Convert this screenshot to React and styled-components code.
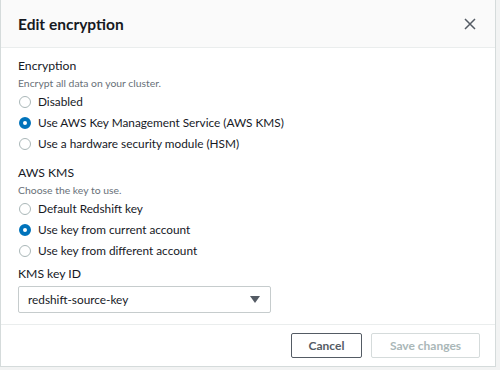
import React from 'react';
import styled, { createGlobalStyle } from 'styled-components';

const GlobalStyle = createGlobalStyle`
    body {
        margin: 0;
        background: #f2f3f3;
        font-family: Lato, "Noto Sans", Arial, sans-serif;
        color: #16191f;
    }
`;

const Page = styled.div`
    width: 500px;
    height: 370px;
    overflow: hidden;
    background: #f2f3f3;
`;

const Dialog = styled.div`
    width: 496px;
    height: 367px;
    background: #fff;
    border: 1px solid #d5dbdb;
    border-top: none;
    display: flex;
    flex-direction: column;
    box-sizing: border-box;
`;

const Header = styled.div`
    height: 48px;
    flex-shrink: 0;
    box-sizing: border-box;
    background: #fafafa;
    border-bottom: 1px solid #eaeded;
    display: flex;
    align-items: center;
    justify-content: space-between;
    padding: 0 18px 0 17px;
    h2 {
        margin: 0;
        font-size: 15.5px;
        font-weight: 700;
    }
`;

const CloseButton = styled.button`
    border: none;
    background: none;
    padding: 0;
    width: 14px;
    height: 14px;
    display: flex;
    align-items: center;
    justify-content: center;
`;

const Body = styled.div`
    flex: 1;
    min-height: 0;
    padding: 9px 17px 0;
`;

const Section = styled.div`
    margin-bottom: ${p => p.$gap ?? 10}px;
`;

const Label = styled.div`
    font-size: 12.2px;
    line-height: 18px;
`;

const Description = styled.div`
    font-size: 10.4px;
    line-height: 16px;
    color: #687078;
`;

const RadioRow = styled.label`
    display: flex;
    align-items: center;
    height: 21px;
    font-size: 11.8px;
    padding-left: 1px;
`;

const Circle = styled.span`
    width: 12px;
    height: 12px;
    box-sizing: border-box;
    border-radius: 50%;
    margin-right: 7px;
    border: ${p => (p.$checked ? '4px solid #0073bb' : '1.2px solid #aab7b8')};
    background: #fff;
    flex-shrink: 0;
`;

const Select = styled.div`
    margin-top: 3px;
    width: 253px;
    height: 27px;
    box-sizing: border-box;
    border: 1px solid #c6cccd;
    border-radius: 2px;
    display: flex;
    align-items: center;
    justify-content: space-between;
    padding: 0 10px 0 9px;
    font-size: 11.8px;
`;

const Footer = styled.div`
    height: 42px;
    flex-shrink: 0;
    box-sizing: border-box;
    border-top: 1px solid #eaeded;
    display: flex;
    justify-content: flex-end;
    align-items: center;
    gap: 9px;
    padding: 0 15px 0 0;
`;

const Button = styled.button`
    height: 25px;
    width: ${p => p.$w}px;
    box-sizing: border-box;
    border-radius: 2px;
    background: #fff;
    font-family: inherit;
    font-size: 12px;
    font-weight: 700;
    padding: 0;
    border: 1px solid ${p => (p.disabled ? '#d5dbdb' : '#545b64')};
    color: ${p => (p.disabled ? '#aab7b8' : '#545b64')};
`;

function Radio({ label, checked }) {
    return (
        <RadioRow>
            <Circle $checked={checked} />
            {label}
        </RadioRow>
    );
}

export default function App() {
    return (
        <Page>
            <GlobalStyle />
            <Dialog>
                <Header>
                    <h2>Edit encryption</h2>
                    <CloseButton>
                        <svg width="12" height="12" viewBox="0 0 12 12">
                            <path d="M1 1 L11 11 M11 1 L1 11" stroke="#545b64" strokeWidth="1.5" />
                        </svg>
                    </CloseButton>
                </Header>
                <Body>
                    <Section>
                        <Label>Encryption</Label>
                        <Description>Encrypt all data on your cluster.</Description>
                        <Radio label="Disabled" />
                        <Radio label="Use AWS Key Management Service (AWS KMS)" checked />
                        <Radio label="Use a hardware security module (HSM)" />
                    </Section>
                    <Section $gap={4}>
                        <Label>AWS KMS</Label>
                        <Description>Choose the key to use.</Description>
                        <Radio label="Default Redshift key" />
                        <Radio label="Use key from current account" checked />
                        <Radio label="Use key from different account" />
                    </Section>
                    <Section $gap={0}>
                        <Label>KMS key ID</Label>
                        <Select>
                            <span>redshift-source-key</span>
                            <svg width="10" height="7" viewBox="0 0 10 7">
                                <path d="M0 0 H10 L5 7 Z" fill="#545b64" />
                            </svg>
                        </Select>
                    </Section>
                </Body>
                <Footer>
                    <Button $w={71}>Cancel</Button>
                    <Button $w={109} disabled>Save changes</Button>
                </Footer>
            </Dialog>
        </Page>
    );
}
